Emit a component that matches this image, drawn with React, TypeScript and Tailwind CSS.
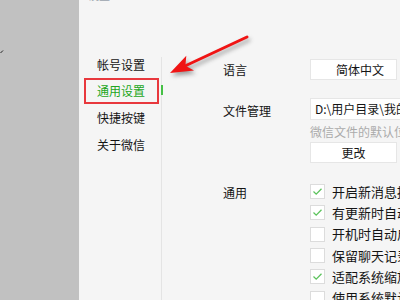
export default function App() {
  const checks = [
    { label: "开启新消息提醒声音", checked: true },
    { label: "有更新时自动升级微信", checked: true },
    { label: "开机时自动启动微信", checked: false },
    { label: "保留聊天记录", checked: false },
    { label: "适配系统缩放比例", checked: true },
    { label: "使用系统默认浏览器打开网页", checked: false },
  ];
  return (
    <div className="relative w-[400px] h-[300px] flex overflow-hidden font-['Noto_Sans_CJK_SC','Noto_Sans',sans-serif] text-[#141414]">
      <div className="w-[79px] shrink-0 bg-[#c1c1c1]" />
      <div className="flex-1 bg-[#f5f5f5] flex flex-col min-w-0">
        <div className="h-[15px] -mt-[12px] pl-[9px] text-[11px] leading-[15px] text-[#9aa3ad]">设置</div>
        <div className="mt-[48px] flex flex-1">
          <div className="w-[82px] shrink-0 flex flex-col">
            {["帐号设置", "通用设置", "快捷按键", "关于微信"].map((t, i) => (
              <div
                key={t}
                className={
                  i === 1
                    ? "h-[26px] leading-[26px] pl-[18px] text-[12px] text-[#22a622]"
                    : "h-[27px] leading-[27px] pl-[18px] text-[12px]"
                }
              >
                {t}
              </div>
            ))}
          </div>
          <div className="relative w-px shrink-0 mt-[6px] bg-[#e4e4e4]">
            <div className="absolute left-0 top-[28px] w-[2px] h-[10px] bg-[#45c045]" />
          </div>
          <div className="flex-1 pl-[61px] flex flex-col text-[12px] min-w-0">
            <div className="mt-[8px] flex items-center">
              <div className="w-[87px] shrink-0">语言</div>
              <div className="w-[87px] h-[21px] shrink-0 bg-white border border-[#e6e6e6] pl-[25px] leading-[19px] text-[12px]">简体中文</div>
            </div>
            <div className="mt-[18px] flex items-center">
              <div className="w-[87px] shrink-0 pt-[3px]">文件管理</div>
              <div className="w-[120px] h-[22px] shrink-0 bg-white border border-[#e6e6e6] pl-[4px] leading-[20px] text-[12px] whitespace-nowrap overflow-hidden">D:\用户目录\我的文档\WeChat Files</div>
            </div>
            <div className="mt-[5px] ml-[87px] h-[14px] leading-[14px] text-[12px] text-[#ababab] whitespace-nowrap">微信文件的默认位置</div>
            <div className="mt-[3px] ml-[87px] w-[87px] h-[21px] bg-white border border-[#e6e6e6] text-center leading-[19px] text-[12px]">更改</div>
            <div className="mt-[18px] flex">
              <div className="w-[87px] shrink-0 pt-[3px]">通用</div>
              <div className="flex flex-col">
                {checks.map((c) => (
                  <div key={c.label} className="h-[21.3px] flex items-center gap-[7px] whitespace-nowrap">
                    <div className="w-[15px] h-[15px] shrink-0 bg-white border border-[#dcdcdc] flex items-center justify-center">
                      {c.checked && (
                        <svg width="13" height="13" viewBox="0 0 13 13">
                          <path d="M2.5 6.5 L5.2 9.2 L10.5 3.8" fill="none" stroke="#5cc35c" strokeWidth="1.3" />
                        </svg>
                      )}
                    </div>
                    <span className="text-[13px] leading-[16px]">{c.label}</span>
                  </div>
                ))}
              </div>
            </div>
          </div>
        </div>
      </div>
      <div className="absolute left-[84px] top-[78px] w-[75px] h-[26px] border-2 border-[#e8383d]" />
      <svg className="absolute left-0 top-0 pointer-events-none" width="400" height="300" viewBox="0 0 400 300">
        <defs>
          <filter id="sh" x="-20%" y="-50%" width="140%" height="200%">
            <feGaussianBlur stdDeviation="2" />
          </filter>
        </defs>
        <path d="M0.5 53 L3 50.5" stroke="#222" strokeWidth="1" />
        <g transform="translate(2,3)" filter="url(#sh)" opacity="0.55">
          <line x1="247" y1="37" x2="186" y2="65.5" stroke="#555" strokeWidth="3" strokeLinecap="round" />
          <polygon points="170,73 186.3,55.8 185.4,65.8 194,70.6" fill="#555" />
        </g>
        <line x1="247" y1="37" x2="186" y2="65.5" stroke="#f01414" strokeWidth="3" strokeLinecap="round" />
        <polygon points="170,73 186.3,55.8 185.4,65.8 194,70.6" fill="#f01414" />
      </svg>
    </div>
  );
}
